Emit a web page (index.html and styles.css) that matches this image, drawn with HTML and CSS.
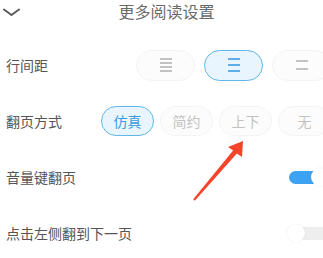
FILE: index.html
```html
<!DOCTYPE html>
<html lang="zh">
<head>
<meta charset="utf-8">
<link rel="stylesheet" href="styles.css">
</head>
<body>
<div class="page">
  <header class="header">
    <svg class="chevron" width="20" height="22" viewBox="0 0 20 22"><path d="M4 9.5 L11.5 15 L19 9.5" fill="none" stroke="#5a5a5a" stroke-width="2" stroke-linecap="round" stroke-linejoin="round"/></svg>
    <div class="title">更多阅读设置</div>
    <div></div>
  </header>
  <div class="content">
    <div class="row">
      <div class="label">行间距</div>
      <div class="options spacing">
        <div class="pill wide">
          <svg width="14" height="16" viewBox="0 0 14 16"><g stroke="#aaa" stroke-width="1.4"><line x1="1" y1="2" x2="13" y2="2"/><line x1="1" y1="6" x2="13" y2="6"/><line x1="1" y1="10" x2="13" y2="10"/><line x1="1" y1="14" x2="13" y2="14"/></g></svg>
        </div>
        <div class="pill wide active">
          <svg width="14" height="16" viewBox="0 0 14 16"><g stroke="#3a9be2" stroke-width="1.6"><line x1="1" y1="2" x2="13" y2="2"/><line x1="1" y1="8" x2="13" y2="8"/><line x1="1" y1="14" x2="13" y2="14"/></g></svg>
        </div>
        <div class="pill wide">
          <svg width="14" height="16" viewBox="0 0 14 16"><g stroke="#aaa" stroke-width="1.4"><line x1="1" y1="4" x2="13" y2="4"/><line x1="1" y1="12" x2="13" y2="12"/></g></svg>
        </div>
      </div>
    </div>
    <div class="row">
      <div class="label">翻页方式</div>
      <div class="options mode">
        <div class="pill narrow active">仿真</div>
        <div class="pill narrow">简约</div>
        <div class="pill narrow">上下</div>
        <div class="pill narrow">无</div>
      </div>
    </div>
    <div class="row">
      <div class="label">音量键翻页</div>
      <div class="toggle on"><div class="track"></div><div class="knob"></div></div>
    </div>
    <div class="row">
      <div class="label">点击左侧翻到下一页</div>
      <div class="toggle"><div class="track"></div><div class="knob"></div></div>
    </div>
  </div>
  <svg class="arrow" width="323" height="258" viewBox="0 0 323 258"><polygon points="243,141 228,147 233.1,150.4 193.2,199.3 194.8,200.7 236.9,153.6 242,157" fill="#f4452c"/></svg>
</div>
</body>
</html>
```
FILE: styles.css
```css
html, body {
  margin: 0;
  padding: 0;
  background: #fff;
  width: 323px;
  height: 258px;
  overflow: hidden;
}
body {
  font-family: "Noto Sans CJK SC", "Noto Sans", sans-serif;
}
.page {
  position: relative;
  width: 323px;
  height: 258px;
}
.header {
  display: grid;
  grid-template-columns: 30px 1fr 20px;
  align-items: center;
  height: 22px;
  width: 323px;
  margin-bottom: 15px;
}
.chevron {
  display: block;
}
.title {
  text-align: center;
  font-size: 16px;
  color: #6a6a6a;
  line-height: 22px;
}
.content {
  width: 331px;
  padding-left: 6px;
  box-sizing: border-box;
}
.row {
  display: flex;
  align-items: center;
  height: 56px;
}
.label {
  flex: 1;
  font-size: 14px;
  color: #555;
}
.options {
  display: flex;
}
.spacing { gap: 9px; }
.mode { gap: 6px; }
.pill {
  box-sizing: border-box;
  height: 31px;
  border-radius: 16px;
  border: 1px solid #f4f4f4;
  background: #fcfcfc;
  display: flex;
  align-items: center;
  justify-content: center;
  font-size: 14px;
  color: #c2c2c2;
}
.pill svg { display: block; }
.wide { width: 59px; }
.narrow { width: 53px; height: 30px; }
.pill.active {
  background: #e8f5fe;
  border-color: #62b7ea;
  color: #3a9be2;
}
.toggle {
  position: relative;
  width: 46px;
  height: 18px;
  margin-right: -2px;
}
.track {
  position: absolute;
  left: 2px;
  right: 0;
  top: 2.5px;
  height: 13px;
  border-radius: 7px;
  background: #eeeeee;
}
.knob {
  position: absolute;
  left: 0;
  top: 0;
  width: 18px;
  height: 18px;
  border-radius: 50%;
  background: #fff;
  box-shadow: 0 0 2px rgba(0,0,0,0.1);
}
.toggle.on .track { background: #3ea2f2; }
.toggle.on .knob { left: auto; right: 4px; }
.arrow {
  position: absolute;
  left: 0;
  top: 0;
  pointer-events: none;
}
```
